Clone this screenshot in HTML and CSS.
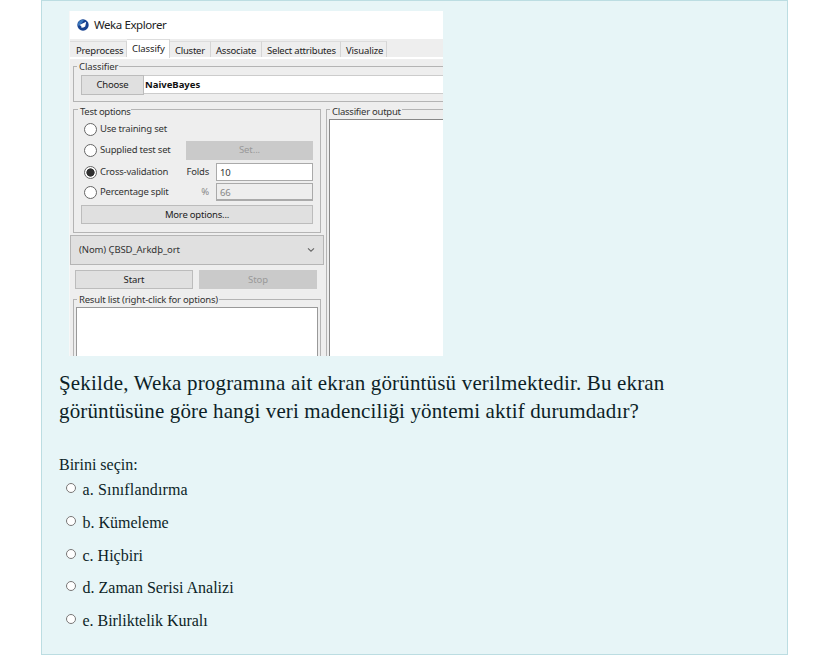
FILE: index.html
```html
<!DOCTYPE html>
<html lang="tr">
<head>
<meta charset="utf-8">
<title>Soru</title>
<link rel="stylesheet" href="styles.css">
</head>
<body>
<main class="question">
  <section class="weka">
    <header class="titlebar">
      <svg class="logo" width="12" height="12" viewBox="0 0 12 12"><circle cx="6" cy="6" r="5.7" fill="#17418f"/><path d="M1 7A5 5 0 0 1 7 1L4 5Z" fill="#3977bd"/><path d="M2.4 6.1 9.2 2.8 8.2 7.6 6.4 8.6 4.5 8.8 4.2 6.9Z" fill="#fff"/></svg>
      <span class="app-name">Weka Explorer</span>
    </header>
    <nav class="tabs">
      <span class="tab t-pre">Preprocess</span><span class="tab t-classify active">Classify</span><span class="tab t-cluster">Cluster</span><span class="tab t-assoc">Associate</span><span class="tab t-select">Select attributes</span><span class="tab t-visual">Visualize</span>
    </nav>
    <div class="group classifier">
      <span class="legend l-classifier">Classifier</span>
      <div class="button choose"><span>Choose</span></div>
      <div class="scheme">NaiveBayes</div>
    </div>
    <div class="columns">
      <div class="left">
        <div class="group test">
          <span class="legend l-test">Test options</span>
          <div class="row r1"><i class="dot"></i><span class="w-train">Use training set</span></div>
          <div class="row r2"><i class="dot"></i><span class="w-supplied">Supplied test set</span><div class="button off set">Set...</div></div>
          <div class="row r3"><i class="dot on"></i><span class="w-cross">Cross-validation</span><span class="side">Folds</span><div class="field">10</div></div>
          <div class="row r4"><i class="dot"></i><span class="w-percent">Percentage split</span><span class="side dim">%</span><div class="field disabled">66</div></div>
          <div class="button more"><span>More options...</span></div>
        </div>
        <div class="combo"><span>(Nom) ÇBSD_Arkdþ_ort</span><svg width="8" height="6" viewBox="0 0 8 6"><path d="M1 1.3 4 4.2 7 1.3" fill="none" stroke="#666" stroke-width="1.1"/></svg></div>
        <div class="actions"><div class="button">Start</div><div class="button off">Stop</div></div>
        <div class="group results">
          <span class="legend l-result">Result list (right-click for options)</span>
          <div class="list"></div>
        </div>
      </div>
      <div class="group output">
        <span class="legend l-output">Classifier output</span>
        <div class="console"></div>
      </div>
    </div>
  </section>
  <p class="prompt"><span class="line1">Şekilde, Weka programına ait ekran görüntüsü verilmektedir. Bu ekran</span><br><span class="line2">görüntüsüne göre hangi veri madenciliği yöntemi aktif durumdadır?</span></p>
  <div class="pick">Birini seçin:</div>
  <div class="answers">
    <label class="answer"><input type="radio" name="q"><span class="a">a. Sınıflandırma</span></label>
    <label class="answer"><input type="radio" name="q"><span class="b">b. Kümeleme</span></label>
    <label class="answer"><input type="radio" name="q"><span class="c">c. Hiçbiri</span></label>
    <label class="answer"><input type="radio" name="q"><span class="d">d. Zaman Serisi Analizi</span></label>
    <label class="answer"><input type="radio" name="q"><span class="e">e. Birliktelik Kuralı</span></label>
  </div>
</main>
</body>
</html>
```
FILE: styles.css
```css
* { box-sizing: border-box; }
body { margin: 0; background: #fff; color: #0d1f27; font-family: "Liberation Serif", serif; }
.question { width: 747px; height: 655px; margin-left: 41px; padding: 10px 17px 0; background: #e7f5f7; border: 1px solid #bcdde2; overflow: hidden; }

.weka { width: 374px; height: 345px; margin-left: 10px; overflow: hidden; background: #eee; color: #333; font: 9.5px/12px "Noto Sans", sans-serif; letter-spacing: -.09px; white-space: nowrap; border-left: 1px solid #f7f7f7; }
.titlebar { height: 28px; display: flex; align-items: center; padding-left: 7px; background: #fff; }
.app-name { margin-left: 5px; font-size: 11.5px; letter-spacing: -.42px; line-height: 16px; color: #222; }
.tabs { display: flex; height: 20px; align-items: flex-end; border-bottom: 2px solid #fff; }
.tab { height: 16px; padding-left: 5px; border-right: 1px solid #d5d5d5; border-top: 1px solid #ddd; line-height: 17px; color: #222; }
.tab.active { height: 19px; background: #fff; margin-bottom: -1px; }
.t-pre { width: 57px; padding-left: 6px; letter-spacing: -.18px; }
.t-classify { width: 43px; }
.t-cluster { width: 41px; letter-spacing: -.25px; }
.t-assoc { width: 51px; letter-spacing: -.2px; }
.t-select { width: 79px; letter-spacing: -.22px; }
.t-visual { width: 46px; letter-spacing: -.15px; }

.group { position: relative; border: 1px solid #b4b4b4; }
.legend { position: absolute; left: 4px; top: -7px; padding: 0 1px 0 2px; background: #eee; line-height: 14px; }
.l-classifier { left: 3px; }
.l-test { top: -5px; letter-spacing: -.3px; }
.l-output { left: 3px; top: -5px; letter-spacing: -.25px; }
.l-result { left: 3px; letter-spacing: -.2px; }
.classifier { display: flex; height: 36px; width: 390px; margin: 7px 0 0 3px; padding: 8px 0 0 7px; }
.button { display: flex; align-items: center; justify-content: center; background: #e0e0e0; border: 1px solid #bcbcbc; color: #222; }
.button.off { background: #cacaca; border-color: #cacaca; color: #999; }
.choose { width: 63px; height: 20px; letter-spacing: -.25px; }
.scheme { flex: 1; height: 19px; background: #fff; border: 1px solid #ccc; border-left: 0; padding-left: 1px; font-weight: bold; letter-spacing: 0; line-height: 17px; color: #111; }
.columns { display: flex; margin-top: 7px; }
.left { width: 254px; flex: none; }
.test { width: 248px; height: 124px; margin-left: 3px; }
.row { display: flex; align-items: center; height: 20px; padding-left: 10px; }
.r1 { margin-top: 9px; }
.r2 { margin-top: 1px; }
.r3 { margin-top: 2px; }
.r4 { margin-top: 0; }
.dot { width: 13px; height: 13px; margin-right: 3px; border: 1px solid #666; border-radius: 50%; background: #fff; flex: none; }
.dot.on { background: radial-gradient(circle, #303030 0 3.8px, #fff 4.4px); }
.row > span { flex: none; letter-spacing: -.2px; }
.w-train, .w-supplied, .w-cross, .w-percent { width: 85px; }
.w-supplied { width: 86px; }
.set { width: 127px; height: 19px; }
.side { width: 24px; margin-right: 7px; text-align: right; }
.dim { color: #888; }
.field { width: 97px; height: 18px; background: #fff; border: 1px solid #aaa; padding-left: 3px; line-height: 17px; }
.disabled { background: #eee; color: #888; border-bottom-width: 2px; }
.more { width: 232px; height: 19px; margin: 3px 0 0 7px; letter-spacing: -.2px; }
.combo { display: flex; align-items: center; justify-content: space-between; width: 254px; height: 30px; margin-top: 2px; padding: 0 8px; border: 1px solid #b5b5b5; background: #e0e0e0; }
.actions { display: flex; gap: 6px; padding: 5px 0 0 5px; }
.actions .button { width: 118px; height: 19px; }
.results { width: 248px; height: 70px; margin: 10px 0 0 3px; padding: 7px 2px 0; }
.list { height: 60px; background: #fff; border: 1px solid #999; }
.output { width: 130px; flex: none; height: 270px; margin-left: 2px; padding: 9px 0 0 2px; }
.console { height: 260px; background: #fff; border: 1px solid #888; }

.prompt { margin: 13px 0 0; font-size: 21px; line-height: 28px; white-space: nowrap; }
.line1 { letter-spacing: .17px; }
.line2 { letter-spacing: .14px; }
.pick { margin-top: 30px; font-size: 16px; line-height: 20px; }
.answers { padding-left: 7px; margin-top: 3px; }
.answer { display: flex; height: 32.75px; font-size: 16px; line-height: 23px; }
.answer input { width: 10px; height: 10px; margin: 5px 6.5px 0 0; }
.a { letter-spacing: .14px; }
.e { letter-spacing: -.03px; }
```
